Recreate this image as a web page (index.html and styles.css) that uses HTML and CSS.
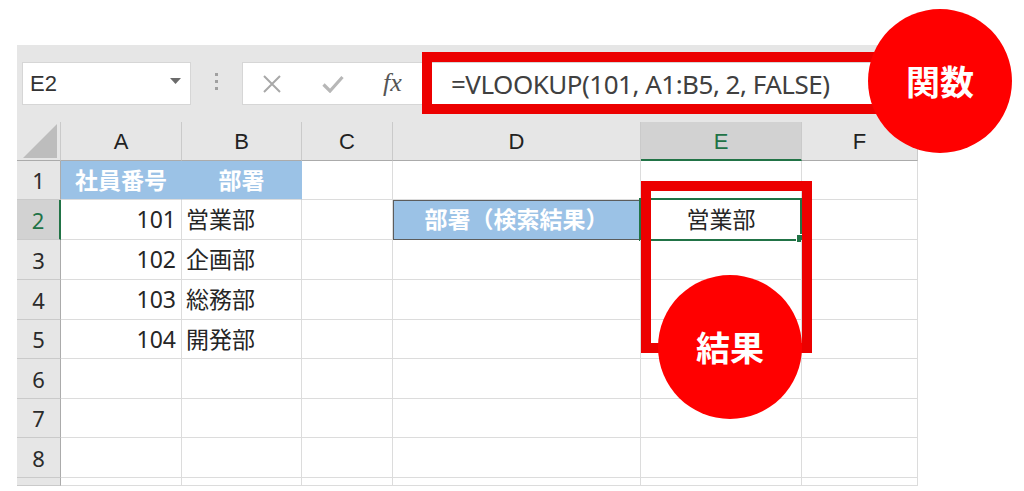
FILE: index.html
```html
<!DOCTYPE html>
<html lang="ja">
<head>
<meta charset="utf-8">
<title>VLOOKUP</title>
<link rel="stylesheet" href="styles.css">
</head>
<body>
<div class="sheet">
  <div class="toolbar">
    <div class="namebox"><span>E2</span><svg class="dd" width="11" height="6" viewBox="0 0 11 6"><path d="M0 0H11L5.5 6Z" fill="#6b6b6b"/></svg></div>
    <div class="grip"><i></i><i></i><i></i></div>
    <div class="fbar">
      <div class="fbtns">
        <svg class="ico-x" width="20" height="18" viewBox="0 0 20 18"><path d="M2 1L18 17M18 1L2 17" stroke="#a8a8a8" stroke-width="2" fill="none"/></svg>
        <svg class="ico-ok" width="22" height="18" viewBox="0 0 22 18"><path d="M1.5 9.5L8 16L20.5 2" stroke="#b7b7b7" stroke-width="3.2" fill="none"/></svg>
        <span class="fx">fx</span>
      </div>
      <div class="finput">=VLOOKUP(101, A1:B5, 2, FALSE)</div>
    </div>
  </div>
  <div class="grid">
    <div class="c h corner"><svg width="34" height="34" viewBox="0 0 34 34"><path d="M34 0V34H0Z" fill="#bdbdbd"/></svg></div>
    <div class="c h">A</div>
    <div class="c h">B</div>
    <div class="c h">C</div>
    <div class="c h">D</div>
    <div class="c h hsel">E</div>
    <div class="c h">F</div>

    <div class="c r">1</div>
    <div class="c blue bold">社員番号</div>
    <div class="c blue bold">部署</div>
    <div class="c"></div>
    <div class="c"></div>
    <div class="c"></div>
    <div class="c"></div>

    <div class="c r rsel">2</div>
    <div class="c num">101</div>
    <div class="c txt">営業部</div>
    <div class="c"></div>
    <div class="c blue bold boxed">部署（検索結果）</div>
    <div class="c center active">営業部</div>
    <div class="c"></div>

    <div class="c r">3</div>
    <div class="c num">102</div>
    <div class="c txt">企画部</div>
    <div class="c"></div>
    <div class="c"></div>
    <div class="c"></div>
    <div class="c"></div>

    <div class="c r">4</div>
    <div class="c num">103</div>
    <div class="c txt">総務部</div>
    <div class="c"></div>
    <div class="c"></div>
    <div class="c"></div>
    <div class="c"></div>

    <div class="c r">5</div>
    <div class="c num">104</div>
    <div class="c txt">開発部</div>
    <div class="c"></div>
    <div class="c"></div>
    <div class="c"></div>
    <div class="c"></div>

    <div class="c r">6</div>
    <div class="c"></div>
    <div class="c"></div>
    <div class="c"></div>
    <div class="c"></div>
    <div class="c"></div>
    <div class="c"></div>

    <div class="c r">7</div>
    <div class="c"></div>
    <div class="c"></div>
    <div class="c"></div>
    <div class="c"></div>
    <div class="c"></div>
    <div class="c"></div>

    <div class="c r">8</div>
    <div class="c"></div>
    <div class="c"></div>
    <div class="c"></div>
    <div class="c"></div>
    <div class="c"></div>
    <div class="c"></div>

    <div class="c r"></div>
    <div class="c"></div>
    <div class="c"></div>
    <div class="c"></div>
    <div class="c"></div>
    <div class="c"></div>
    <div class="c"></div>
  </div>
</div>

<div class="frame frame-formula"></div>
<div class="frame frame-result"></div>
<div class="badge badge-func">関数</div>
<div class="badge badge-result">結果</div>
</body>
</html>
```
FILE: styles.css
```css
* { box-sizing: border-box; }

html, body {
  margin: 0;
  background: #ffffff;
}

body {
  position: relative;
  width: 1024px;
  height: 491px;
  overflow: hidden;
  font-family: "Noto Sans", "Noto Sans CJK JP", sans-serif;
  color: #222;
}

.sheet {
  margin: 45px 0 0 17px;
  width: 901px;
  height: 441px;
  background: #e6e6e6;
  overflow: hidden;
}

/* ---------- formula bar ---------- */
.toolbar {
  height: 77px;
  display: flex;
  align-items: flex-start;
  padding: 17px 0 0 5px;
}

.namebox {
  width: 169px;
  height: 43px;
  background: #fff;
  border: 1px solid #d6d6d6;
  display: flex;
  align-items: center;
  justify-content: space-between;
  padding: 0 9px 0 7px;
  font-family: "Liberation Sans", "Noto Sans", sans-serif;
  font-size: 22px;
  color: #333;
}

.namebox .dd { margin-top: -6px; }

.grip {
  width: 51px;
  height: 43px;
  display: flex;
  flex-direction: column;
  align-items: center;
  justify-content: center;
  gap: 4px;
  padding-bottom: 4px;
}

.grip i {
  display: block;
  width: 3px;
  height: 3px;
  background: #a0a0a0;
}

.fbar {
  flex: 1;
  height: 43px;
  background: #fff;
  border: 1px solid #d6d6d6;
  display: flex;
  align-items: center;
}

.fbtns {
  width: 179px;
  display: flex;
  align-items: center;
  padding-left: 19px;
}

.ico-x { margin-right: 40px; }
.ico-ok { margin-right: 39px; }

.fx {
  font-family: "Liberation Serif", "DejaVu Serif", serif;
  font-style: italic;
  font-size: 26px;
  color: #555;
  line-height: 1;
  margin-top: -2px;
}

.finput {
  padding-left: 29px;
  font-family: "Noto Sans", "Noto Sans CJK JP", sans-serif;
  font-size: 26px;
  letter-spacing: -0.5px;
  line-height: 1;
  color: #404040;
  white-space: nowrap;
}

/* ---------- grid ---------- */
.grid {
  display: grid;
  grid-template-columns: 44px 121px 120px 91px 248px 161px 116px;
  grid-template-rows: 39px 39px 40px 40px 40px 39px 40px 39px 40px 8px;
  background: #fff;
}

.c {
  border-right: 1px solid #dcdcdc;
  border-bottom: 1px solid #dcdcdc;
  display: flex;
  align-items: center;
  font-size: 23px;
  line-height: 1;
  color: #262626;
  white-space: nowrap;
  position: relative;
}

.h {
  background: #e6e6e6;
  border-right-color: #cacaca;
  border-bottom-color: #ababab;
  justify-content: center;
  font-family: "Liberation Sans", "Noto Sans", sans-serif;
  font-size: 22px;
  color: #222;
  padding-top: 2px;
}

.corner {
  align-items: flex-end;
  justify-content: flex-end;
  padding: 0 3px 2px 0;
}

.corner svg { display: block; }

.hsel {
  background: #d2d2d2;
  color: #217346;
  border-bottom: 2px solid #217346;
}

.r {
  background: #e6e6e6;
  border-bottom-color: #cacaca;
  border-right-color: #ababab;
  justify-content: center;
  font-family: "Noto Sans", sans-serif;
  font-size: 22px;
  color: #2b2b2b;
}

.rsel {
  background: #d2d2d2;
  color: #217346;
  border-right: 2px solid #217346;
}

.blue {
  background: #9bc2e6;
  border-right-color: #9bc2e6;
  color: #fff;
  justify-content: center;
}

.bold { font-weight: 700; }

.num {
  justify-content: flex-end;
  padding-right: 5px;
}

.txt { padding-left: 4px; }

.center { justify-content: center; }

.boxed {
  outline: 1px solid #5c5c5c;
  outline-offset: -1px;
  border-right-color: #5c5c5c;
}

.active::before {
  content: "";
  position: absolute;
  left: -2px;
  top: -2px;
  right: -1px;
  bottom: -2px;
  border: 2px solid #217346;
}

.active::after {
  content: "";
  position: absolute;
  right: -4px;
  bottom: -4px;
  width: 7px;
  height: 7px;
  background: #217346;
  border: 1px solid #fff;
}

/* ---------- annotations ---------- */
.frame {
  position: absolute;
  border: 10px solid #ec0000;
}

.frame-formula {
  left: 422px;
  top: 52px;
  width: 478px;
  height: 62px;
}

.frame-result {
  left: 641px;
  top: 181px;
  width: 171px;
  height: 172px;
}

.badge {
  position: absolute;
  width: 144px;
  height: 144px;
  border-radius: 50%;
  background: #ff0000;
  color: #fff;
  display: flex;
  align-items: center;
  justify-content: center;
  font-family: "Noto Sans CJK JP", sans-serif;
  font-weight: 700;
  font-size: 34px;
  line-height: 1;
}

.badge-func {
  left: 868px;
  top: 9px;
}

.badge-result {
  left: 658px;
  top: 275px;
}
```
